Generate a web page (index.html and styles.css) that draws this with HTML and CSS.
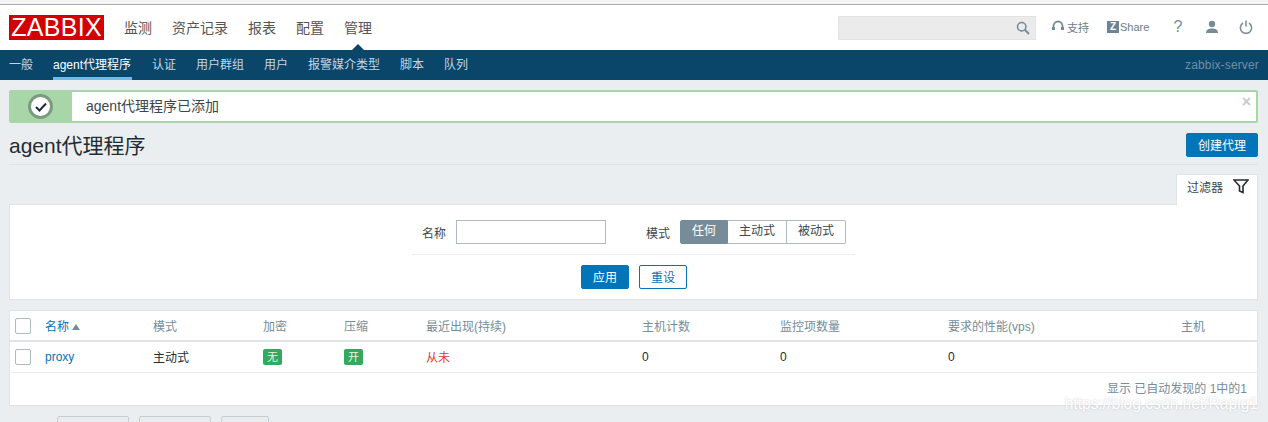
FILE: index.html
```html
<!DOCTYPE html>
<html lang="zh">

<head>
    <meta charset="UTF-8">
    <title>agent代理程序</title>
    <link rel="stylesheet" href="styles.css">
</head>

<body>
    <header class="topbar">
        <div class="logo">ZABBIX</div>
        <nav class="main-menu">
            <a>监测</a>
            <a>资产记录</a>
            <a>报表</a>
            <a>配置</a>
            <a class="selected">管理</a>
        </nav>
        <div class="top-tools">
            <div class="search">
                <svg width="14" height="14" viewBox="0 0 14 14" fill="none" stroke="#768d99" stroke-width="1.6">
                    <circle cx="5.7" cy="5.7" r="4.2"></circle>
                    <path d="M8.8 8.8 13 13" stroke-width="2"></path>
                </svg>
            </div>
            <a class="tool support">
                <svg width="12" height="14" viewBox="0 0 12 14" fill="none" stroke="#768d99" stroke-width="1.8">
                    <path d="M1.5 9V6a4.5 4.5 0 0 1 9 0v3"></path>
                    <path d="M1.5 7v3M10.5 7v3" stroke-width="3"></path>
                </svg>
                <span>支持</span>
            </a>
            <a class="tool share"><span class="share-z">Z</span><span>Share</span></a>
            <a class="tool help">?</a>
            <a class="tool user">
                <svg width="14" height="14" viewBox="0 0 14 14" fill="#768d99">
                    <circle cx="7" cy="4" r="3.2"></circle>
                    <path d="M1 13c0-3.5 2.5-4.6 6-4.6s6 1.100 6 4.600z"></path>
                </svg>
            </a>
            <a class="tool power">
                <svg width="14" height="14" viewBox="0 0 14 14" fill="none" stroke="#768d99" stroke-width="1.500">
                    <path d="M4 3a5.600 5.600 0 1 0 6 0"></path>
                    <path d="M7 .5v6"></path>
                </svg>
            </a>
        </div>
    </header>

    <nav class="sub-menu">
        <a>一般</a>
        <a class="selected">agent代理程序</a>
        <a>认证</a>
        <a>用户群组</a>
        <a>用户</a>
        <a>报警媒介类型</a>
        <a>脚本</a>
        <a>队列</a>
        <span class="server-name">zabbix-server</span>
    </nav>

    <main class="content">
        <div class="msg-good">
            <div class="msg-icon">
                <span class="msg-circle">
                    <svg width="12" height="10" viewBox="0 0 12 10" fill="none" stroke="#1f2c33" stroke-width="2">
                        <path d="M1 5l3.500 3.500L11 1.500"></path>
                    </svg>
                </span>
            </div>
            <div class="msg-text">agent代理程序已添加</div>
            <span class="msg-close">×</span>
        </div>

        <div class="page-title">
            <h1>agent代理程序</h1>
            <button class="btn">创建代理</button>
        </div>

        <div class="filter-tabs">
            <div class="filter-tab">
                <span>过滤器</span>
                <svg class="filter-icon" width="16" height="15" viewBox="0 0 16 15" fill="none" stroke="#1f2c33" stroke-width="1.600">
                    <path d="M1 1h14L10 7v6.500L6.500 12V7z"></path>
                </svg>
            </div>
        </div>
        <div class="filter-box">
            <div class="filter-row">
                <label>名称</label>
                <input class="filter-input" type="text">
                <label class="mode-label">模式</label>
                <div class="radio-group">
                    <span class="on">任何</span>
                    <span>主动式</span>
                    <span>被动式</span>
                </div>
            </div>
            <div class="filter-actions">
                <button class="btn">应用</button>
                <button class="btn btn-alt">重设</button>
            </div>
        </div>

        <div class="list-box">
            <table class="list-table">
                <thead>
                    <tr>
                        <th class="col-check"><span class="checkbox"></span></th>
                        <th class="col-name"><a>名称</a><span class="sort-up"></span></th>
                        <th class="col-mode">模式</th>
                        <th class="col-enc">加密</th>
                        <th class="col-zip">压缩</th>
                        <th class="col-seen">最近出现(持续)</th>
                        <th class="col-hosts">主机计数</th>
                        <th class="col-items">监控项数量</th>
                        <th class="col-perf">要求的性能(vps)</th>
                        <th>主机</th>
                    </tr>
                </thead>
                <tbody>
                    <tr>
                        <td><span class="checkbox"></span></td>
                        <td><a>proxy</a></td>
                        <td class="cjk-cell">主动式</td>
                        <td><span class="tag">无</span></td>
                        <td><span class="tag">开</span></td>
                        <td class="cjk-cell red">从未</td>
                        <td>0</td>
                        <td>0</td>
                        <td>0</td>
                        <td></td>
                    </tr>
                </tbody>
            </table>
            <div class="table-stats">显示 已自动发现的 1中的1</div>
        </div>

        <div class="bottom-actions">
            <button class="btn-muted wide"></button>
            <button class="btn-muted wide"></button>
            <button class="btn-muted"></button>
        </div>
        <div class="watermark">https://blog.csdn.net/Rapig1</div>
    </main>
</body>

</html>
```

FILE: styles.css
```css
html,
body {
    height: 422px;
    overflow: hidden;
}

body {
    margin: 0;
    position: relative;
    background-color: #ebeef0;
    color: #1f2c33;
    font-family: "Liberation Sans", "Noto Sans CJK SC", sans-serif;
    font-size: 12px;
}

.topbar {
    display: flex;
    align-items: center;
    height: 45px;
    padding: 0 0 0 9px;
    background: #fff;
    border-top: 1px solid #acacac;
    box-shadow: 0 -4px 0 #f4f4f4;
    margin-top: 4px;
}

.logo {
    width: 95px;
    height: 25px;
    background: #d40000;
    color: #fff;
    font-size: 25px;
    line-height: 25px;
    text-align: center;
    letter-spacing: 0.3px;
}

.main-menu {
    display: flex;
    gap: 20px;
    margin-left: 20px;
    height: 45px;
    align-items: center;
}

.main-menu a {
    position: relative;
    color: #555;
    font-size: 14px;
    margin-top: -1px;
}

.main-menu a.selected::after {
    content: "";
    position: absolute;
    left: 6px;
    bottom: -15px;
    border: 8px solid transparent;
    border-top: 0;
    border-bottom-color: #0a466a;
}

.top-tools {
    display: flex;
    align-items: center;
    margin-left: auto;
    height: 45px;
}

.search {
    box-sizing: border-box;
    display: flex;
    align-items: center;
    justify-content: flex-end;
    width: 198px;
    height: 24px;
    margin-top: 1px;
    padding-right: 5px;
    background: #ebebeb;
    border: 1px solid #e3e3e3;
}

.tool {
    display: flex;
    align-items: center;
    color: #768d99;
    font-size: 11px;
    margin-top: -1px;
}

.support {
    margin-left: 16px;
    gap: 3px;
    width: 50px;
}

.support span {
    color: #6c7e88;
}

.share {
    margin-left: 5px;
    width: 54px;
    color: #6c7e88;
}

.share-z {
    width: 12px;
    height: 12px;
    margin-right: 1px;
    background: #6e8494;
    color: #fff;
    font-size: 10px;
    font-weight: bold;
    line-height: 12px;
    text-align: center;
}

.help {
    width: 34px;
    justify-content: center;
    font-size: 16px;
}

.user {
    width: 34px;
    justify-content: center;
}

.power {
    width: 34px;
    justify-content: center;
    margin-right: 5px;
}

.sub-menu {
    display: flex;
    align-items: stretch;
    height: 30px;
    padding: 0 9px;
    gap: 20px;
    background: #0a466a;
    color: #c3d6e3;
    line-height: 30px;
}

.sub-menu a.selected {
    min-width: 79px;
    color: #fff;
    box-shadow: inset 0 -3px 0 #70bbee;
}

.server-name {
    margin-left: auto;
    color: #6f8fa5;
    letter-spacing: 0.15px;
}

.content {
    padding: 10px 10px 0 9px;
}

.msg-good {
    position: relative;
    display: flex;
    box-sizing: border-box;
    height: 33px;
    background: #fff;
    border: 2px solid #a8d6a8;
    border-radius: 2px;
}

.msg-icon {
    display: flex;
    align-items: center;
    justify-content: center;
    width: 59px;
    padding-right: 2px;
    background: #a8d6a8;
}

.msg-circle {
    box-sizing: border-box;
    display: flex;
    align-items: center;
    justify-content: center;
    width: 25px;
    height: 25px;
    background: #fff;
    border: 3px solid #7c9a7f;
    border-radius: 50%;
}

.msg-text {
    padding-left: 14px;
    color: #3b474e;
    font-size: 14px;
    line-height: 29px;
}

.msg-close {
    position: absolute;
    top: 0;
    right: 5px;
    color: #c3ccd1;
    font-size: 16px;
    font-weight: bold;
    line-height: 20px;
}

.page-title {
    display: flex;
    align-items: flex-start;
    justify-content: space-between;
    box-sizing: border-box;
    height: 42px;
    padding-top: 10px;
    border-bottom: 1px solid #dfe4e7;
}

h1 {
    margin: 0;
    color: #1f2c33;
    font-size: 21px;
    font-weight: normal;
    line-height: 26px;
}

.btn {
    height: 24px;
    padding: 0 11px 2px;
    background: #0275b8;
    border: 1px solid #0275b8;
    border-radius: 2px;
    color: #fff;
    font: inherit;
}

.btn-alt {
    background: #fff;
    color: #0275b8;
}

.filter-tabs {
    display: flex;
    justify-content: flex-end;
    margin-top: 9px;
}

.filter-tab {
    display: flex;
    align-items: flex-start;
    gap: 10px;
    box-sizing: border-box;
    width: 82px;
    height: 31px;
    margin-bottom: -1px;
    padding: 3px 0 0 10px;
    background: #fff;
    border: 1px solid #dfe4e7;
    border-bottom: 0;
    position: relative;
    color: #3b474e;
}

.filter-icon {
    margin-top: 1px;
}

.filter-box {
    box-sizing: border-box;
    height: 96px;
    padding: 15px 0 0;
    background: #fff;
    border: 1px solid #dfe4e7;
}

.filter-row {
    display: flex;
    align-items: center;
    width: 443px;
    height: 24px;
    margin-left: 402px;
    padding-bottom: 10px;
    border-bottom: 1px solid #ebeef0;
    color: #3b474e;
}

.filter-row label {
    margin-left: 10px;
}

.filter-input {
    box-sizing: border-box;
    width: 150px;
    height: 24px;
    margin-left: 10px;
    border: 1px solid #acbbc2;
}

.filter-row .mode-label {
    margin-left: 40px;
}

.radio-group {
    display: flex;
    margin-left: 10px;
    height: 24px;
    line-height: 21px;
}

.radio-group span {
    box-sizing: border-box;
    padding: 0 11px;
    border: 1px solid #acbbc2;
    border-left: 0;
    background: #fff;
}

.radio-group span:first-child {
    border: 1px solid #768d99;
    background: #768d99;
    color: #fff;
    border-radius: 2px 0 0 2px;
}

.radio-group span:last-child {
    border-radius: 0 2px 2px 0;
}

.filter-actions {
    display: flex;
    justify-content: center;
    gap: 10px;
    margin-top: 10px;
    padding-left: 1px;
}

.list-box {
    margin-top: 10px;
    box-sizing: border-box;
    height: 96px;
    background: #fff;
    border: 1px solid #dfe4e7;
}

.list-table {
    width: 100%;
    border-collapse: collapse;
    table-layout: fixed;
}

.list-table th {
    height: 29px;
    padding: 0 0 0 5px;
    border-bottom: 2px solid #dfe4e7;
    color: #768d99;
    font-weight: normal;
    text-align: left;
}

.list-table td {
    height: 30px;
    padding: 0 0 0 5px;
    border-bottom: 1px solid #ebeef0;
    color: #1f2c33;
}

.list-table td.cjk-cell {
    height: 28px;
    padding-bottom: 2px;
}

.list-table a {
    color: #0275b8;
}

.col-check { width: 25px; }
.col-name { width: 103px; }
.col-mode { width: 105px; }
.col-enc { width: 76px; }
.col-zip { width: 77px; }
.col-seen { width: 211px; }
.col-hosts { width: 133px; }
.col-items { width: 163px; }
.col-perf { width: 228px; }

.checkbox {
    display: block;
    box-sizing: border-box;
    width: 16px;
    height: 16px;
    background: #fff;
    border: 1px solid #acbbc2;
    border-radius: 2px;
}

.sort-up {
    display: inline-block;
    margin-left: 3px;
    vertical-align: 1px;
    border: 4px solid transparent;
    border-top: 0;
    border-bottom: 6px solid #768d99;
}

.tag {
    display: inline-block;
    width: 19px;
    height: 16px;
    background: #34a85c;
    border-radius: 2px;
    color: #e4f5e9;
    font-size: 11px;
    line-height: 16px;
    text-align: center;
}

.list-table td.red {
    color: #e33734;
}

.table-stats {
    padding: 10px 10px 0 0;
    color: #768d99;
    line-height: 12px;
    text-align: right;
}

.bottom-actions {
    display: flex;
    gap: 10px;
    margin-top: 10px;
    margin-left: 48px;
}

.btn-muted {
    box-sizing: border-box;
    width: 48px;
    height: 24px;
    background: #e9ebed;
    border: 1px solid #c6cfd4;
    border-radius: 2px;
}

.btn-muted.wide {
    width: 72px;
}

.watermark {
    position: absolute;
    right: 10px;
    top: 395px;
    color: #fff;
    font-size: 15.6px;
    line-height: 17px;
    text-shadow: 0 0 2px rgba(110, 120, 130, 0.4);
}
```
